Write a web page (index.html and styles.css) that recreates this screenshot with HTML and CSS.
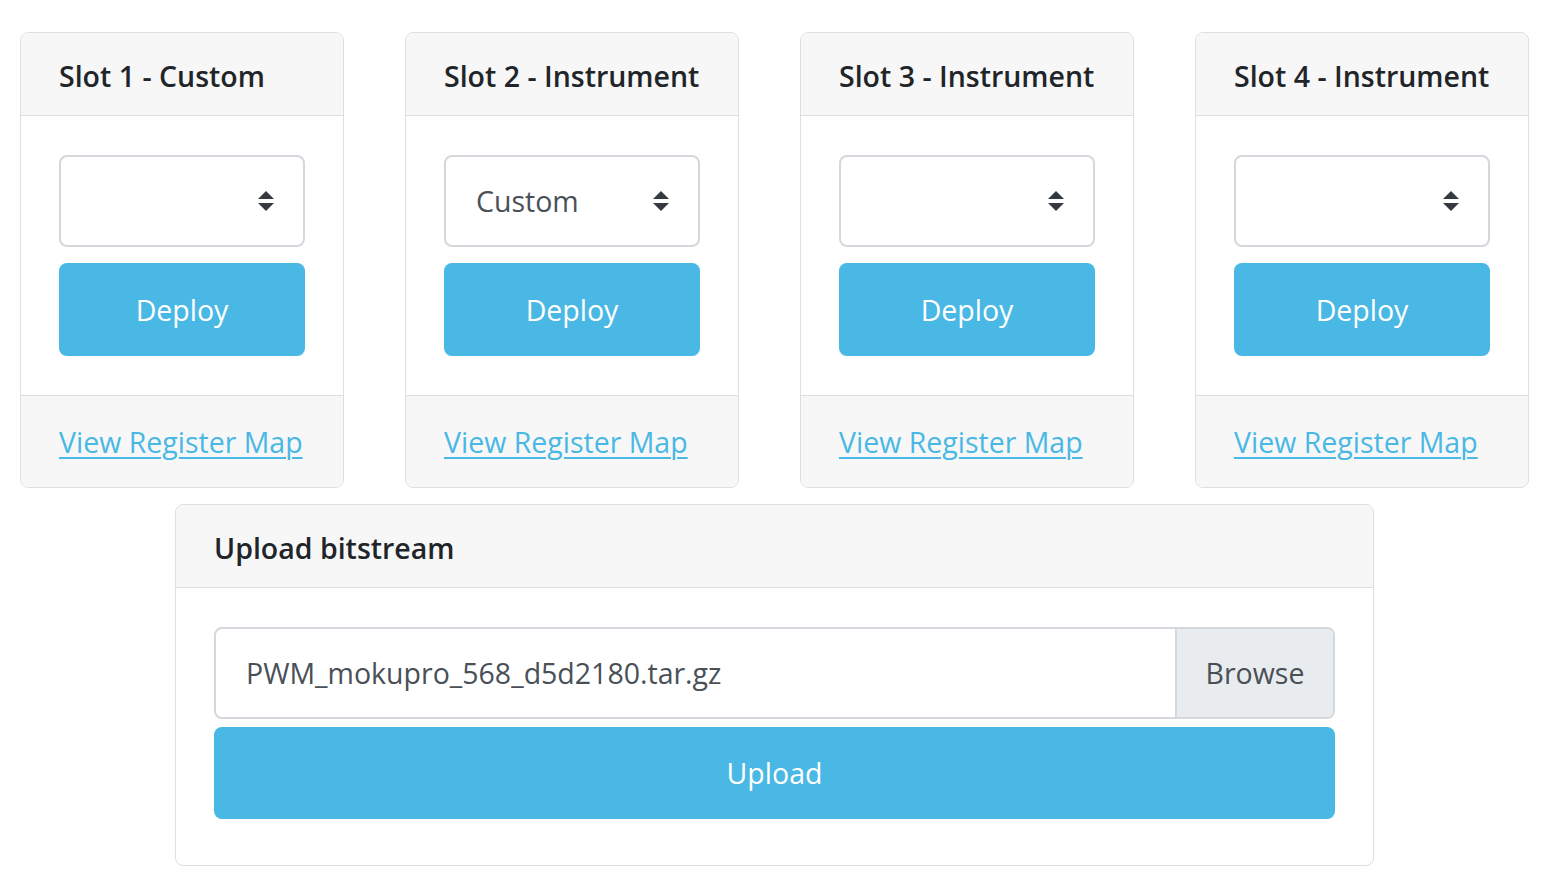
FILE: index.html
```html
<!DOCTYPE html>
<html lang="en">
<head>
  <meta charset="UTF-8" />
  <meta name="viewport" content="width=device-width, initial-scale=1.0"/>
  <title>Slots</title>
  <link rel="stylesheet" href="styles.css">
</head>
<body>

  <div class="slots">
    <div class="card slot slot-narrow">
      <div class="card-header">Slot 1 - Custom</div>
      <div class="card-body">
        <div class="select-wrap">
          <select class="custom-select"><option></option></select>
          <svg class="select-arrow" viewBox="0 0 16 20" width="16" height="20"><path d="M8 0 L16 8 H0 Z M0 12 H16 L8 20 Z" fill="#343a40"/></svg>
        </div>
        <button class="btn-info">Deploy</button>
      </div>
      <div class="card-footer"><a href="#">View Register Map</a></div>
    </div>

    <div class="card slot">
      <div class="card-header">Slot 2 - Instrument</div>
      <div class="card-body">
        <div class="select-wrap">
          <select class="custom-select"><option>Custom</option></select>
          <svg class="select-arrow" viewBox="0 0 16 20" width="16" height="20"><path d="M8 0 L16 8 H0 Z M0 12 H16 L8 20 Z" fill="#343a40"/></svg>
        </div>
        <button class="btn-info">Deploy</button>
      </div>
      <div class="card-footer"><a href="#">View Register Map</a></div>
    </div>

    <div class="card slot">
      <div class="card-header">Slot 3 - Instrument</div>
      <div class="card-body">
        <div class="select-wrap">
          <select class="custom-select"><option></option></select>
          <svg class="select-arrow" viewBox="0 0 16 20" width="16" height="20"><path d="M8 0 L16 8 H0 Z M0 12 H16 L8 20 Z" fill="#343a40"/></svg>
        </div>
        <button class="btn-info">Deploy</button>
      </div>
      <div class="card-footer"><a href="#">View Register Map</a></div>
    </div>

    <div class="card slot">
      <div class="card-header">Slot 4 - Instrument</div>
      <div class="card-body">
        <div class="select-wrap">
          <select class="custom-select"><option></option></select>
          <svg class="select-arrow" viewBox="0 0 16 20" width="16" height="20"><path d="M8 0 L16 8 H0 Z M0 12 H16 L8 20 Z" fill="#343a40"/></svg>
        </div>
        <button class="btn-info">Deploy</button>
      </div>
      <div class="card-footer"><a href="#">View Register Map</a></div>
    </div>
  </div>

  <div class="card upload">
    <div class="card-header">Upload bitstream</div>
    <div class="card-body upload-body">
      <label class="file-field">
        <span class="file-name">PWM_mokupro_568_d5d2180.tar.gz</span>
        <span class="file-browse">Browse</span>
      </label>
      <button class="btn-info">Upload</button>
    </div>
  </div>

</body>
</html>
```

FILE: styles.css
```css
* { box-sizing: border-box; }

body {
  margin: 0;
  padding: 32px 0 0;
  background: #fff;
  font-family: 'Open Sans', 'Noto Sans', sans-serif;
  font-size: 28.5px;
  color: #212529;
}

.slots {
  display: flex;
  gap: 61px;
  padding-left: 20px;
}

.card {
  background: #fff;
  border: 1px solid #dfdfdf;
  border-radius: 8px;
  overflow: hidden;
}

.slot { width: 334px; }
.slot-narrow { width: 324px; }

.card-header {
  height: 83px;
  display: flex;
  align-items: center;
  padding: 3px 38px 0;
  background: #f7f7f7;
  border-bottom: 1px solid #dfdfdf;
  font-weight: 600;
}

.card-body {
  display: flex;
  flex-direction: column;
  gap: 16px;
  padding: 39px 38px;
}

.select-wrap {
  position: relative;
}

.custom-select {
  appearance: none;
  -webkit-appearance: none;
  width: 100%;
  height: 92px;
  padding: 0 60px 0 30px;
  border: 2px solid #d4d7db;
  border-radius: 8px;
  background: #fff;
  font-family: inherit;
  font-size: 28.5px;
  color: #495057;
  outline: none;
}

.select-arrow {
  position: absolute;
  right: 31px;
  top: 36px;
  pointer-events: none;
}

.btn-info {
  height: 93px;
  border: none;
  border-radius: 8px;
  background: #49b8e5;
  color: #fff;
  font-family: inherit;
  font-size: 28.5px;
  cursor: pointer;
}

.card-footer {
  height: 92px;
  display: flex;
  align-items: center;
  padding: 0 38px;
  background: #f7f7f7;
  border-top: 1px solid #dfdfdf;
}

.card-footer a {
  color: #49b8e5;
  text-decoration: underline;
  text-decoration-thickness: 2px;
  text-underline-offset: 4px;
}

.upload {
  width: 1199px;
  margin: 16px 0 0 175px;
}

.upload-body {
  gap: 8px;
  padding-bottom: 46px;
}

.file-field {
  display: flex;
  height: 92px;
  border: 2px solid #d4d7db;
  border-radius: 8px;
  overflow: hidden;
  color: #495057;
}

.file-name {
  flex: 1;
  display: flex;
  align-items: center;
  padding-left: 30px;
}

.file-browse {
  width: 158px;
  display: flex;
  align-items: center;
  justify-content: center;
  background: #e9ecef;
  border-left: 2px solid #d4d7db;
}

.upload .btn-info { height: 92px; }
```
